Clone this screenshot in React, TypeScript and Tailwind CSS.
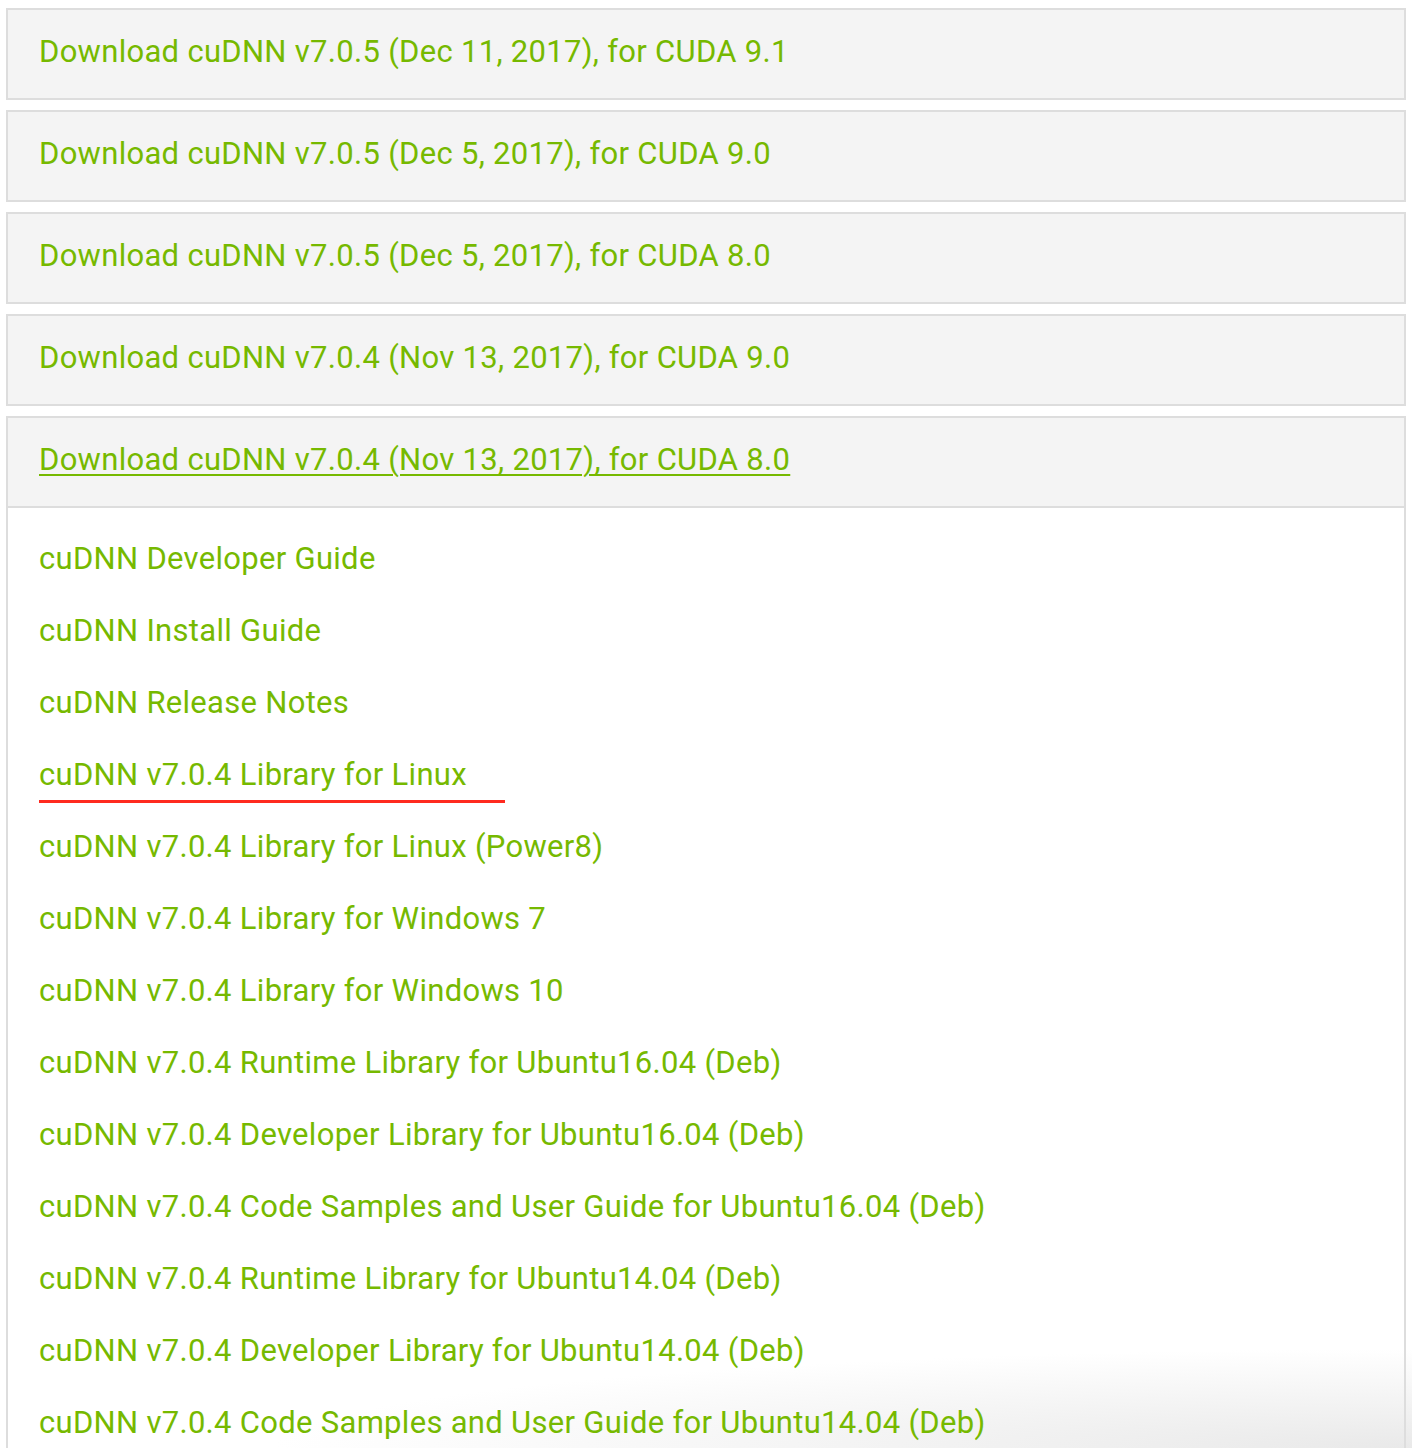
const closed = [
  'Download cuDNN v7.0.5 (Dec 11, 2017), for CUDA 9.1',
  'Download cuDNN v7.0.5 (Dec 5, 2017), for CUDA 9.0',
  'Download cuDNN v7.0.5 (Dec 5, 2017), for CUDA 8.0',
  'Download cuDNN v7.0.4 (Nov 13, 2017), for CUDA 9.0',
];

const links = [
  'cuDNN Developer Guide',
  'cuDNN Install Guide',
  'cuDNN Release Notes',
  'cuDNN v7.0.4 Library for Linux',
  'cuDNN v7.0.4 Library for Linux (Power8)',
  'cuDNN v7.0.4 Library for Windows 7',
  'cuDNN v7.0.4 Library for Windows 10',
  'cuDNN v7.0.4 Runtime Library for Ubuntu16.04 (Deb)',
  'cuDNN v7.0.4 Developer Library for Ubuntu16.04 (Deb)',
  'cuDNN v7.0.4 Code Samples and User Guide for Ubuntu16.04 (Deb)',
  'cuDNN v7.0.4 Runtime Library for Ubuntu14.04 (Deb)',
  'cuDNN v7.0.4 Developer Library for Ubuntu14.04 (Deb)',
  'cuDNN v7.0.4 Code Samples and User Guide for Ubuntu14.04 (Deb)',
];

export default function App() {
  return (
    <div className="relative h-[1448px] w-[1412px] overflow-hidden bg-white px-[6px] pt-2 font-['Roboto',sans-serif] text-[31px] tracking-[0.3px] text-[#76b900]">
      {/* soft shadow in the bottom corner, behind the links */}
      <div className="pointer-events-none absolute bottom-0 right-0 h-[100px] w-[1150px] bg-[radial-gradient(ellipse_at_bottom_right,#e9e9e9,transparent_70%)]" />

      <div className="relative flex flex-col gap-[10px]">
        {closed.map((t) => (
          <div key={t} className="flex h-[92px] items-center border-2 border-[#dddddd] bg-[#f4f4f4] px-[31px] pb-[3px]">
            <a href="#">{t}</a>
          </div>
        ))}

        {/* expanded panel */}
        <div className="border-2 border-[#dddddd]">
          <div className="flex h-[90px] items-center border-b-2 border-[#dddddd] bg-[#f4f4f4] px-[31px] pb-[3px]">
            <a href="#" className="underline decoration-2 underline-offset-4">
              Download cuDNN v7.0.4 (Nov 13, 2017), for CUDA 8.0
            </a>
          </div>
          <div className="flex flex-col px-[31px] pt-[15px]">
            {links.map((t, i) => (
              <div key={t} className="relative flex h-[72px] items-center">
                <a href="#">{t}</a>
                {i === 3 && (
                  <div className="absolute left-0 top-[61px] h-[3px] w-[466px] bg-[#ff2a1f]" />
                )}
              </div>
            ))}
          </div>
        </div>
      </div>
    </div>
  );
}
